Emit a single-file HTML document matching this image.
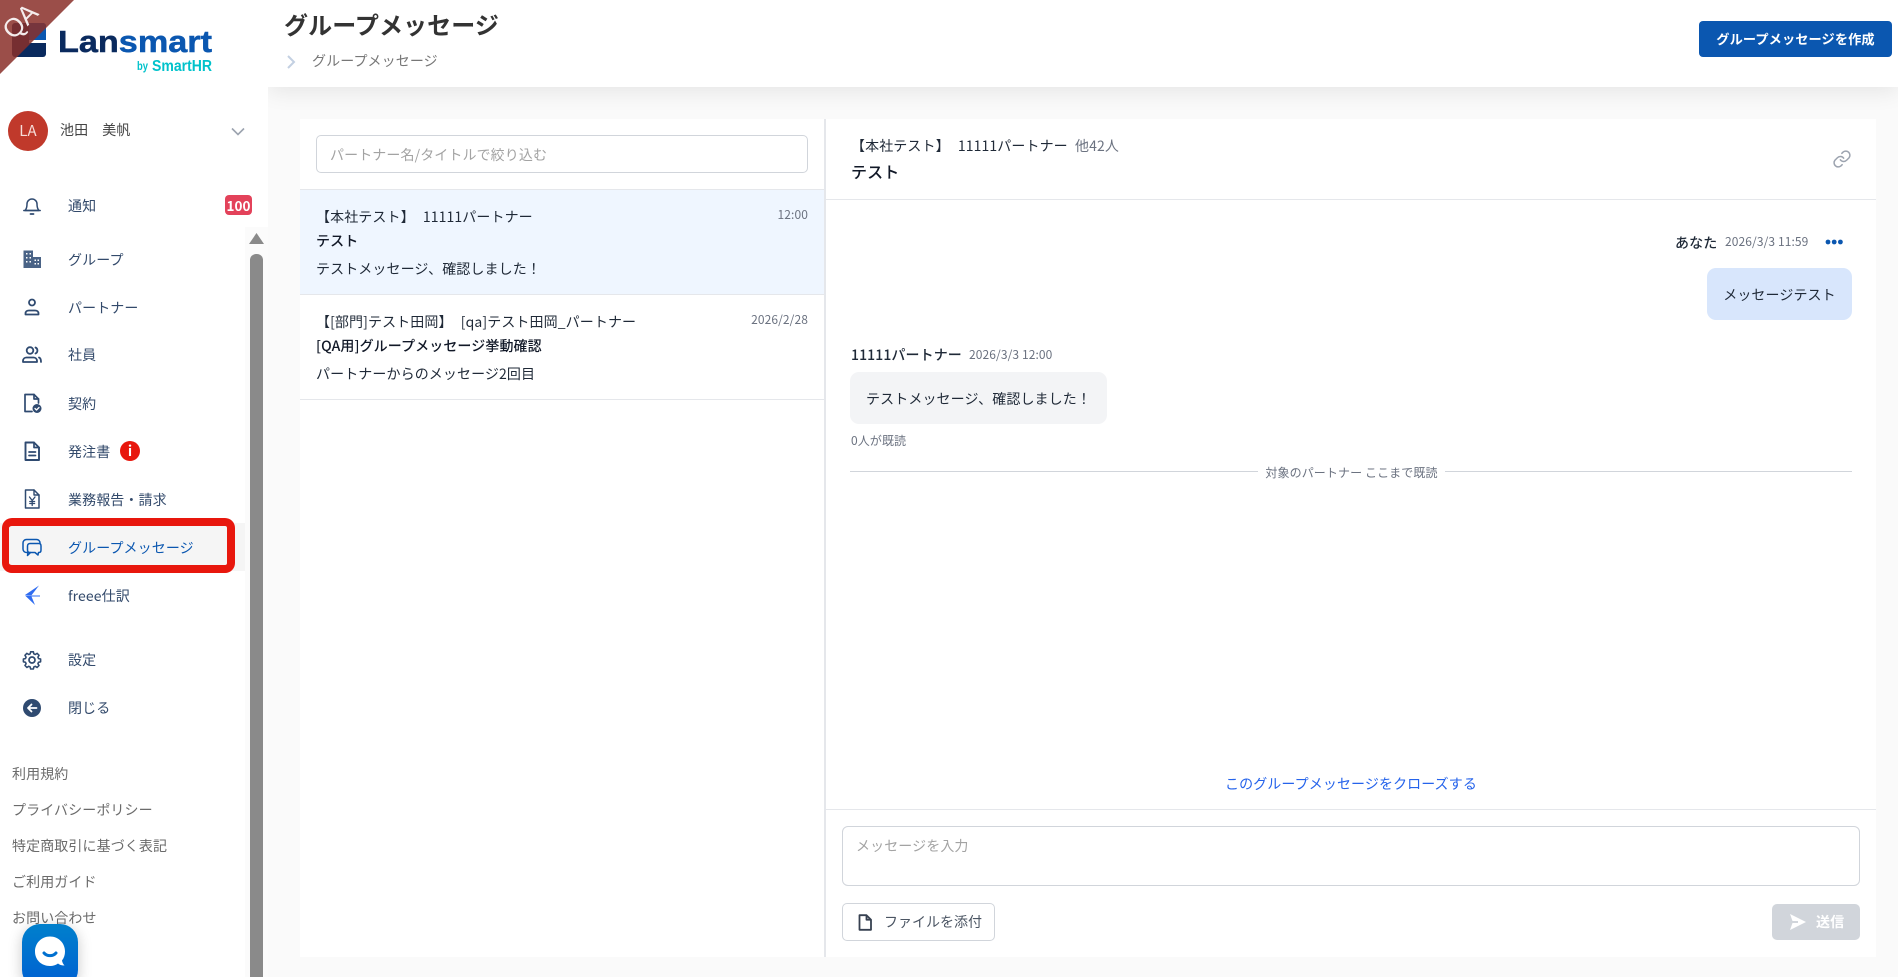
<!DOCTYPE html>
<html lang="ja"><head><meta charset="utf-8"><title>グループメッセージ</title>
<style>
*{box-sizing:border-box;margin:0;padding:0}
html,body{width:1898px;height:977px;overflow:hidden;background:#fafafa;font-family:"Noto Sans CJK JP","Liberation Sans",sans-serif;font-size:14px;color:#1f2937}
#w{position:relative;width:1898px;height:977px;overflow:hidden;background:#fafafa}
.a{position:absolute;white-space:nowrap;line-height:20px;letter-spacing:.1px}
svg{position:absolute;display:block;overflow:visible}
.nav{left:68px;color:#334a6b}
.ic{left:20px;width:24px;height:24px;fill:none;stroke:#2f4a70;stroke-width:2;stroke-linecap:round;stroke-linejoin:round}
.foot{left:12px;color:#6b6b6b}
.g{color:#6b7280}
.ws{word-spacing:5px}
</style></head><body><div id="w">

<!-- header -->
<div class="a" style="left:268px;top:0;width:1630px;height:87px;background:#fff;box-shadow:0 4px 22px rgba(0,0,0,.09)"></div>
<div class="a" style="left:284px;top:8px;font-size:24px;line-height:32px;font-weight:700;color:#333">グループメッセージ</div>
<svg style="left:286px;top:54px" width="10" height="16" viewBox="0 0 10 16"><path d="M2 2l6 6-6 6" fill="none" stroke="#c3d0e2" stroke-width="2"/></svg>
<div class="a" style="left:312px;top:51px;color:#777">グループメッセージ</div>
<div class="a" style="left:1699px;top:21px;width:193px;height:36px;background:#0b57b0;border-radius:4px;color:#fff;font-weight:700;font-size:13.2px;line-height:36px;text-align:center">グループメッセージを作成</div>

<!-- panel -->
<div class="a" style="left:300px;top:119px;width:1576px;height:838px;background:#fff"></div>
<div class="a" style="left:824px;top:119px;width:2px;height:838px;background:#e5e7eb"></div>

<!-- search -->
<div class="a" style="left:316px;top:135px;width:492px;height:38px;border:1px solid #d1d5db;border-radius:5px;background:#fff;padding-left:13px;line-height:38px;color:#a3a3a3">パートナー名/タイトルで絞り込む</div>
<div class="a" style="left:300px;top:189px;width:524px;height:1px;background:#e5e7eb"></div>
<div class="a" style="left:300px;top:190px;width:524px;height:104px;background:#eff6ff"></div>
<div class="a" style="left:300px;top:294px;width:524px;height:1px;background:#e5e7eb"></div>
<div class="a" style="left:300px;top:399px;width:524px;height:1px;background:#e5e7eb"></div>

<div class="a ws" style="left:316px;top:207px">【本社テスト】 11111パートナー</div>
<div class="a" style="left:316px;top:231px;font-weight:500;color:#111827">テスト</div>
<div class="a" style="left:316px;top:259px">テストメッセージ、確認しました！</div>
<div class="a g" style="right:1090px;top:205px;font-size:12px">12:00</div>

<div class="a ws" style="left:316px;top:312px">【[部門]テスト田岡】 [qa]テスト田岡_パートナー</div>
<div class="a" style="left:316px;top:336px;font-weight:500;color:#111827">[QA用]グループメッセージ挙動確認</div>
<div class="a" style="left:316px;top:364px">パートナーからのメッセージ2回目</div>
<div class="a g" style="right:1090px;top:310px;font-size:12px">2026/2/28</div>

<!-- right header -->
<div class="a ws" style="left:851px;top:136px">【本社テスト】 11111パートナー</div>
<div class="a g" style="left:1075px;top:136px">他42人</div>
<div class="a" style="left:851px;top:160px;font-size:16px;line-height:22px;font-weight:500;color:#111827">テスト</div>
<svg style="left:1832px;top:149px" width="20" height="20" viewBox="0 0 24 24" fill="none" stroke="#9ca3af" stroke-width="1.800" stroke-linecap="round" stroke-linejoin="round"><path d="M10 13a5 5 0 0 0 7.500.500l3-3a5 5 0 0 0-7-7l-1.700 1.700"/><path d="M14 11a5 5 0 0 0-7.500-.500l-3 3a5 5 0 0 0 7 7l1.700-1.700"/></svg>
<div class="a" style="left:826px;top:199px;width:1050px;height:1px;background:#e5e7eb"></div>

<!-- messages -->
<div class="a" style="left:1675px;top:233px;font-weight:500;color:#1f2937">あなた</div>
<div class="a g" style="left:1725px;top:232px;font-size:12px">2026/3/3 11:59</div>
<svg style="left:1825px;top:238px" width="18" height="8" viewBox="0 0 18 8" fill="#0b57b0"><circle cx="3" cy="4" r="2.400"/><circle cx="9.200" cy="4" r="2.400"/><circle cx="15.400" cy="4" r="2.400"/></svg>
<div class="a" style="left:1707px;top:268px;width:145px;height:52px;background:#d8e6fc;border-radius:9px;line-height:54px;text-align:center">メッセージテスト</div>

<div class="a" style="left:851px;top:345px;font-weight:500;color:#1f2937">11111パートナー</div>
<div class="a g" style="left:969px;top:345px;font-size:12px">2026/3/3 12:00</div>
<div class="a" style="left:850px;top:372px;width:257px;height:52px;background:#f3f4f6;border-radius:9px;line-height:54px;text-align:center">テストメッセージ、確認しました！</div>
<div class="a g" style="left:851px;top:431px;font-size:12px">0人が既読</div>
<div class="a" style="left:850px;top:471px;width:1002px;height:1px;background:#d1d5db"></div>
<div class="a g" style="left:1258px;top:462px;width:187px;background:#fff;font-size:12px;line-height:21px;text-align:center">対象のパートナー ここまで既読</div>

<div class="a" style="left:826px;top:774px;width:1050px;text-align:center;color:#2563eb">このグループメッセージをクローズする</div>
<div class="a" style="left:826px;top:809px;width:1050px;height:1px;background:#e5e7eb"></div>

<div class="a" style="left:842px;top:826px;width:1018px;height:60px;border:1px solid #d1d5db;border-radius:6px;padding:9px 0 0 13px;color:#a3a3a3">メッセージを入力</div>
<div class="a" style="left:842px;top:903px;width:153px;height:38px;border:1px solid #d1d5db;border-radius:5px;background:#fff"></div>
<svg style="left:858px;top:914px" width="15" height="17" viewBox="0 0 15 17" fill="none" stroke="#374151" stroke-width="1.800" stroke-linejoin="round"><path d="M1.500 1.200h7l4.500 4.500V15.800H1.500z"/><path d="M8.500 1.200v4.500h4.500"/></svg>
<div class="a" style="left:884px;top:912px;color:#4b5563;font-size:14px;letter-spacing:0">ファイルを添付</div>
<div class="a" style="left:1772px;top:904px;width:88px;height:36px;background:#d1d5db;border-radius:5px"></div>
<svg style="left:1789px;top:913px" width="18" height="18" viewBox="0 0 18 18" fill="#fff"><path d="M1 1l16 8-16 8 2.500-7H9V8H3.500z"/></svg>
<div class="a" style="left:1816px;top:912px;color:#fff;font-weight:700">送信</div>

<!-- sidebar -->
<div class="a" style="left:0;top:0;width:268px;height:977px;background:#fff"></div>

<!-- logo -->
<svg style="left:0;top:0" width="268" height="90" viewBox="0 0 268 90">
<rect x="12" y="23" width="34" height="34" rx="3" fill="#0a2a5e"/>
<path d="M29 23h14a3 3 0 0 1 3 3v14H29z" fill="#0b57b0"/>
<rect x="29" y="40" width="17" height="3" fill="#fff"/>
<text x="58" y="52" font-family="Liberation Sans" font-weight="700" font-size="31" textLength="154" lengthAdjust="spacingAndGlyphs" stroke-width=".5" fill="#0a2a5e" stroke="#0a2a5e">Lan<tspan fill="#0b57b0" stroke="#0b57b0">smart</tspan></text>
<text x="137" y="70" font-family="Liberation Sans" font-weight="700" font-size="12" textLength="11" lengthAdjust="spacingAndGlyphs" fill="#00c2cb">by</text>
<text x="152" y="71" font-family="Liberation Sans" font-weight="700" font-size="15.500" textLength="60" lengthAdjust="spacingAndGlyphs" fill="#00c2cb">SmartHR</text>
</svg>

<!-- QA ribbon -->
<svg style="left:0;top:0" width="76" height="76" viewBox="0 0 76 76">
<path d="M0 0H74L0 74z" fill="#8a2f29" fill-opacity=".85"/>
<text x="20" y="30" text-anchor="middle" transform="rotate(-45 20 21)" font-family="Liberation Sans" font-size="26" fill="#fff" fill-opacity=".9">QA</text>
</svg>

<!-- user -->
<div class="a" style="left:8px;top:111px;width:40px;height:40px;border-radius:50%;background:#c0392b;color:#f6dcd8;text-align:center;line-height:40px;font-size:15px">LA</div>
<div class="a" style="left:60px;top:120px;color:#444">池田　美帆</div>
<svg style="left:231px;top:127px" width="14" height="9" viewBox="0 0 14 9"><path d="M1 1.500l6 6 6-6" fill="none" stroke="#9ca3af" stroke-width="1.600"/></svg>

<!-- nav -->
<svg class="ic" style="top:193px" viewBox="0 0 24 24"><path d="M5 17.500c1.500-1.500 2-3 2-6.500a5 5 0 0 1 10 0c0 3.500.5 5 2 6.500z" stroke-width="1.500"/><path d="M3.800 17.500h16.400" stroke-width="1.500"/><path d="M10.500 21h3" stroke-width="1.800"/></svg>
<div class="a nav" style="top:196px">通知</div>
<div class="a" style="left:225px;top:195px;width:27px;height:20px;background:#e3425a;border-radius:4px;color:#fff;font-weight:700;text-align:center;font-size:13.500px;letter-spacing:0">100</div>

<svg class="ic" style="top:247px" viewBox="0 0 24 24"><path d="M3.500 3.500h9.500v6.500h8v11H3.500z" fill="#4a6386" stroke="none"/><path d="M6 6h1.500v1.500H6zM9.500 6H11v1.500H9.500zM6 10h1.500v1.500H6zM9.500 10H11v1.500H9.500zM6 14h1.500v1.500H6zM9.500 14H11v1.500H9.500zM14.500 12.500H16V14h-1.500zM17.500 12.500H19V14h-1.500zM14.500 16H16v1.500h-1.500zM17.500 16H19v1.500h-1.500z" fill="#fff" stroke="none"/></svg>
<div class="a nav" style="top:250px">グループ</div>

<svg class="ic" style="top:295px" viewBox="0 0 24 24"><circle cx="12" cy="7.500" r="3" stroke-width="1.800"/><path d="M5.500 19.500v-1c0-2 1.500-3 3.500-3h6c2 0 3.500 1 3.500 3v1z" stroke-width="1.800"/></svg>
<div class="a nav" style="top:298px">パートナー</div>

<svg class="ic" style="top:343px" viewBox="0 0 24 24"><circle cx="10" cy="7.500" r="3.300" stroke-width="1.800"/><path d="M3 19v-1c0-2 1.500-3.500 3.500-3.500h7c2 0 3.500 1.500 3.500 3.500v1z" stroke-width="1.800"/><path d="M15.500 4.500a3.300 3.300 0 0 1 0 6M19 14.500c1.500.5 2 2 2 4.500" stroke-width="1.800"/></svg>
<div class="a nav" style="top:345px">社員</div>

<svg class="ic" style="top:391px" viewBox="0 0 24 24"><path d="M12 20.500H5V3.500h9l4.500 4.500v4" stroke-width="1.700"/><path d="M14 3.500V8h4.500" stroke-width="1.700"/><circle cx="17" cy="17.500" r="4.500" fill="#2f4a70" stroke="none"/><path d="M15 17.500l1.500 1.500 2.500-2.500" stroke="#fff" stroke-width="1.300"/></svg>
<div class="a nav" style="top:394px">契約</div>

<svg class="ic" style="top:439px" viewBox="0 0 24 24"><path d="M5.500 3.500h8.500l5 5v12.500H5.500z" stroke-width="1.900"/><path d="M14 3.500v5h5" stroke-width="1.700"/><path d="M9 13h6.500M9 16.500h6.500" stroke-width="1.700"/></svg>
<div class="a nav" style="top:442px">発注書</div>
<div class="a" style="left:120px;top:441px;width:20px;height:20px;border-radius:50%;background:#e8170d;color:#fff;font-weight:700;text-align:center;font-size:14px;line-height:20px">i</div>

<svg class="ic" style="top:487px" viewBox="0 0 24 24"><path d="M5.500 3h8.500l5 5v13H5.500z" stroke-width="1.500"/><path d="M14 3v5h5" stroke-width="1.400"/><path d="M9.500 10l2.700 3.500L15 10M12.200 13.500V18.500M9.800 14.500h4.800M9.800 16.500h4.800" stroke-width="1.300"/></svg>
<div class="a nav" style="top:490px">業務報告・請求</div>

<div class="a" style="left:0;top:523px;width:245px;height:48px;background:#f5f5f5"></div>
<div class="a" style="left:2px;top:518px;width:233px;height:55px;border:8px solid #e8170d;border-left-width:7px;border-radius:10px"></div>
<svg class="ic" style="top:535px;stroke:#0b57b0" viewBox="0 0 24 24"><path d="M7.500 17.500H6.500C4.500 17.500 3 16 3 14V8c0-2 1.500-3.500 3.500-3.500h10c2 0 3.500 1.500 3.500 3.500" stroke-width="1.500"/><path d="M8 17.500l-.5 3 3-3" stroke-width="1.500"/><path d="M10.500 8.500h9c1.500 0 2 1 2 2.500v4c0 1.500-.5 2.500-2 2.500h-.5l-.5 2.500-3-2.500h-5c-1.500 0-2.500-1-2.500-2.500v-4c0-1.500 1-2.500 2.500-2.500z" stroke-width="1.500" transform="translate(-.5 0)"/></svg>
<div class="a" style="left:68px;top:538px;color:#0b57b0">グループメッセージ</div>

<svg class="ic" style="top:583px" viewBox="0 0 24 24"><path d="M19 2.500L5 12l6.500.2z" fill="#2f6cf0" stroke="none"/><path d="M5 12.500L15 22l-3.500-8.500h8.500v-1z" fill="#2f6cf0" stroke="none"/></svg>
<div class="a nav" style="top:586px">freee仕訳</div>

<svg class="ic" style="top:648px" viewBox="0 0 24 24"><circle cx="12" cy="12" r="3" stroke-width="1.700"/><path d="M10.300 3.500h3.400l.5 2.500 1.800.8 2.200-1.400 2.400 2.400-1.400 2.200.8 1.800 2.500.5v3.400l-2.500.5-.8 1.800 1.400 2.200-2.400 2.400-2.200-1.400-1.800.8-.5 2.500h-3.400l-.5-2.500-1.800-.8-2.200 1.400-2.400-2.400 1.400-2.200-.8-1.800-2.500-.5v-3.400l2.500-.5.8-1.800-1.400-2.200 2.400-2.400 2.200 1.400 1.800-.8z" stroke-width="1.900" transform="translate(12 12) scale(.82) translate(-12 -13.500)"/></svg>
<div class="a nav" style="top:650px">設定</div>

<svg class="ic" style="top:696px" viewBox="0 0 24 24"><circle cx="12" cy="12" r="9" fill="#2f4a70" stroke="none"/><path d="M16.500 12H8M11.500 8.500L8 12l3.500 3.500" stroke="#fff" stroke-width="1.800"/></svg>
<div class="a nav" style="top:698px">閉じる</div>

<div class="a foot" style="top:764px">利用規約</div>
<div class="a foot" style="top:800px">プライバシーポリシー</div>
<div class="a foot" style="top:836px">特定商取引に基づく表記</div>
<div class="a foot" style="top:872px">ご利用ガイド</div>
<div class="a foot" style="top:908px">お問い合わせ</div>

<!-- chat widget -->
<div class="a" style="left:22px;top:924px;width:56px;height:64px;border-radius:18px;background:linear-gradient(180deg,#0080cc,#005fd2);box-shadow:0 3px 14px rgba(0,0,0,.22)"></div>
<svg style="left:30px;top:932px" width="40" height="40" viewBox="0 0 40 40"><path d="M20 4.500c8.500 0 15 6.500 15 15 0 3.500-1 6.500-3 9 .3 2 1.200 3.500 2.500 5-3 0-5-.7-6.500-2-2.300 1.600-5 2.500-8 2.500-8.500 0-15-6-15-14.500s6.500-15 15-15z" fill="#fff"/><path d="M14 21c3 3.500 9 3.500 12 0" fill="none" stroke="#0070d0" stroke-width="3" stroke-linecap="round"/></svg>

<!-- scrollbar -->
<div class="a" style="left:245px;top:227px;width:23px;height:750px;background:#fbfbfb"></div>
<svg style="left:249px;top:233px" width="15" height="12" viewBox="0 0 15 12"><path d="M7.500 0L15 11H0z" fill="#8a8a8a"/></svg>
<div class="a" style="left:250px;top:254px;width:13px;height:723px;background:#8a8a8a;border-radius:6px 6px 0 0"></div>

</div></body></html>
